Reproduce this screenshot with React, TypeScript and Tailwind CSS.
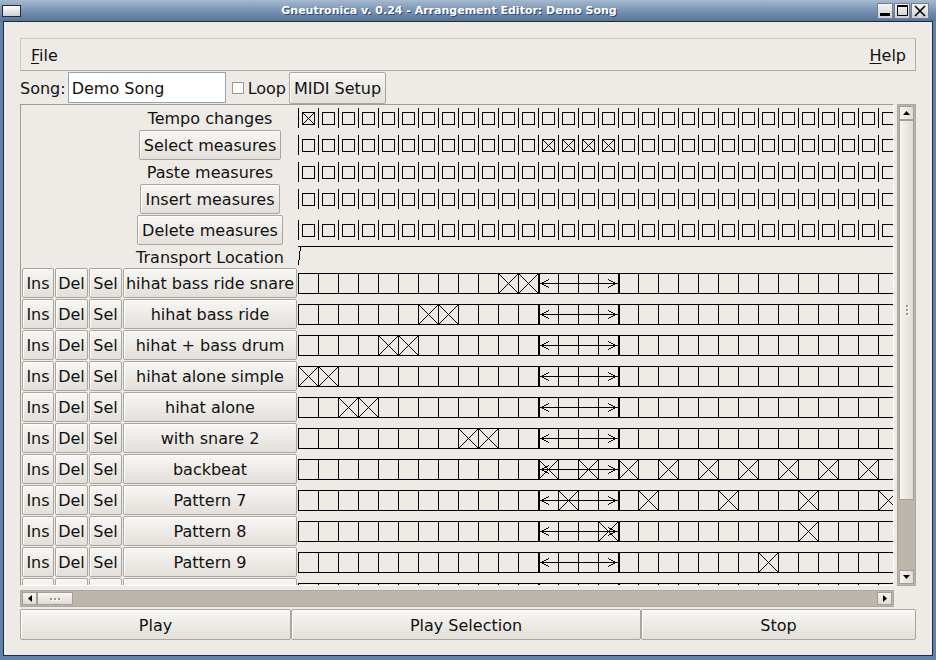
import React from "react";

const COLS = 30;
const idx = Array.from({ length: COLS }, (_, i) => i);

const btn =
  "flex items-center justify-center shrink-0 pt-[2px] rounded-[2px] border border-[#aaa59e] bg-linear-to-b from-[#f8f7f5] to-[#e3dfd9] shadow-[inset_1px_1px_0_#ffffff] text-[16px] leading-none whitespace-nowrap text-[#111]";

function CheckRow({ on = [] }: { on?: number[] }) {
  return (
    <svg width={601} height={20} shapeRendering="crispEdges" className="block shrink-0">
      {idx.map((i) => {
        const x = 20 * i;
        return (
          <g key={i} stroke="#000" fill="none">
            <line x1={x + 0.5} y1={0} x2={x + 0.5} y2={20} />
            <rect x={x + 4.5} y={4.5} width={12} height={12} />
            {on.includes(i) && (
              <>
                <line x1={x + 4.5} y1={4.5} x2={x + 16.5} y2={16.5} />
                <line x1={x + 16.5} y1={4.5} x2={x + 4.5} y2={16.5} />
              </>
            )}
          </g>
        );
      })}
    </svg>
  );
}

function PatternGrid({ marks }: { marks: number[] }) {
  return (
    <svg width={601} height={30} shapeRendering="crispEdges" className="block shrink-0">
      <g stroke="#000" fill="none">
        <line x1={0} y1={5.5} x2={601} y2={5.5} />
        <line x1={0} y1={25.5} x2={601} y2={25.5} />
        {Array.from({ length: 31 }, (_, i) => (
          <line key={i} x1={20 * i + 0.5} y1={5} x2={20 * i + 0.5} y2={26} />
        ))}
        {marks.map((i) => (
          <g key={"m" + i}>
            <line x1={20 * i + 0.5} y1={5.5} x2={20 * i + 20.5} y2={25.5} />
            <line x1={20 * i + 20.5} y1={5.5} x2={20 * i + 0.5} y2={25.5} />
          </g>
        ))}
        <line x1={242} y1={15.5} x2={320} y2={15.5} />
        <polyline points="251,11.5 243,15.5 251,19.5" />
        <polyline points="310,11.5 318,15.5 310,19.5" />
      </g>
      <rect x={240} y={5} width={2} height={21} fill="#000" />
      <rect x={320} y={5} width={2} height={21} fill="#000" />
    </svg>
  );
}

function TransportGrid() {
  return (
    <svg width={601} height={21} shapeRendering="crispEdges" className="block shrink-0">
      <line x1={0} y1={0.5} x2={601} y2={0.5} stroke="#000" />
      <line x1={2.5} y1={1} x2={0.5} y2={19} stroke="#000" />
    </svg>
  );
}

const patterns: [string, number[]][] = [
  ["hihat bass ride snare", [10, 11]],
  ["hihat bass ride", [6, 7]],
  ["hihat + bass drum", [4, 5]],
  ["hihat alone simple", [0, 1]],
  ["hihat alone", [2, 3]],
  ["with snare 2", [8, 9]],
  ["backbeat", [12, 14, 16, 18, 20, 22, 24, 26, 28]],
  ["Pattern 7", [13, 17, 21, 25, 29]],
  ["Pattern 8", [15, 25]],
  ["Pattern 9", [23]],
];

function LabelCell({ children, text }: { children: React.ReactNode; text?: boolean }) {
  return (
    <>
      <div className="w-[100px] shrink-0" />
      <div
        className={
          "w-[174px] shrink-0 h-full flex items-center justify-center text-[16px] whitespace-nowrap" +
          (text ? " pt-[2px]" : "")
        }
      >
        {children}
      </div>
    </>
  );
}

function Dots({ vertical }: { vertical?: boolean }) {
  return (
    <div className={vertical ? "flex flex-col gap-[2px]" : "flex gap-[2px]"}>
      {[0, 1, 2].map((i) => (
        <div key={i} className="w-[2px] h-[2px] bg-[#9a958d] shadow-[1px_1px_0_#ffffff]" />
      ))}
    </div>
  );
}

function Arrow({ dir }: { dir: "up" | "down" | "left" | "right" }) {
  const pts =
    dir === "up"
      ? "0,4 3.5,0 7,4"
      : dir === "down"
      ? "0,0 3.5,4 7,0"
      : dir === "left"
      ? "4,0 0,3.5 4,7"
      : "0,0 4,3.5 0,7";
  const w = dir === "up" || dir === "down" ? 7 : 4;
  const h = dir === "up" || dir === "down" ? 4 : 7;
  return (
    <svg width={w} height={h} className="block">
      <polygon points={pts} fill="#000" />
    </svg>
  );
}

const sbBtnV =
  "shrink-0 flex items-center justify-center border border-[#a29d95] bg-linear-to-r from-[#f6f5f3] to-[#e0dcd6]";
const sbBtnH =
  "shrink-0 flex items-center justify-center border border-[#a29d95] bg-linear-to-b from-[#f6f5f3] to-[#e0dcd6]";

export default function App() {
  return (
    <div className="w-[936px] h-[660px] flex flex-col bg-[#6181a7] font-['DejaVu_Sans',sans-serif] text-[#111] overflow-hidden">
      {/* Title bar */}
      <div className="h-[21px] shrink-0 flex items-center bg-linear-to-b from-[#a6b9cf] via-[#7a94b4] to-[#56739a]">
        <div className="ml-[2px] w-[19px] h-[12px] border border-[#2a2a2a] bg-linear-to-b from-white to-[#cfcfcf]" />
        <div className="flex-1 text-center text-white font-bold text-[11px] leading-none [text-shadow:1px_1px_0_#34496b]">
          Gneutronica v. 0.24 - Arrangement Editor: Demo Song
        </div>
        <div className="flex gap-[1px] mr-[7px]">
          <div className="w-[16px] h-[16px] border border-[#6f7f94] bg-linear-to-b from-[#f4f4f4] to-[#cfcfcf] flex items-end justify-center pb-[2px]">
            <div className="w-[10px] h-[3px] bg-black" />
          </div>
          <div className="w-[16px] h-[16px] border border-[#6f7f94] bg-linear-to-b from-[#f4f4f4] to-[#cfcfcf] flex items-center justify-center">
            <div className="w-[11px] h-[11px] border border-black border-t-[2px]" />
          </div>
          <div className="w-[18px] h-[16px] border border-[#6f7f94] bg-linear-to-b from-[#f4f4f4] to-[#cfcfcf] flex items-center justify-center">
            <svg width="12" height="12" className="block">
              <line x1="1" y1="1" x2="11" y2="11" stroke="#000" strokeWidth="1.6" />
              <line x1="11" y1="1" x2="1" y2="11" stroke="#000" strokeWidth="1.6" />
            </svg>
          </div>
        </div>
      </div>

      {/* Window body */}
      <div className="flex-1 mx-[3px] mb-[4px] border border-[#1d2c42] bg-[#eeebe7] flex flex-col px-[16px] pt-[16px]">
        {/* Menu bar */}
        <div className="h-[33px] shrink-0 flex items-center justify-between pt-[2px] pl-[10px] pr-[9px] border border-[#cdc9c2] border-b-[#b0aba3] border-r-[#b0aba3] text-[16px]">
          <span>
            <span className="underline underline-offset-2">F</span>ile
          </span>
          <span>
            <span className="underline underline-offset-2">H</span>elp
          </span>
        </div>

        {/* Song row */}
        <div className="h-[33px] shrink-0 flex items-center text-[16px]">
          <span className="pt-[2px]">Song:</span>
          <div className="ml-[2px] w-[158px] h-[31px] bg-white border border-[#8fa3bb] px-[3px] pt-[2px] flex items-center">
            Demo Song
          </div>
          <div className="ml-[6px] w-[12px] h-[12px] bg-white border border-[#9c9890]" />
          <span className="ml-[4px] pt-[2px]">Loop</span>
          <div className={btn + " ml-[3px] w-[97px] h-[32px]"}>MIDI Setup</div>
        </div>

        {/* Scrolled area */}
        <div className="shrink-0 grid grid-cols-[874px_19px] grid-rows-[482px_17px] gap-x-[3px] gap-y-[4px]">
          {/* Viewport */}
          <div className="border border-[#a09b93] border-b-white border-r-white overflow-hidden">
            <div className="flex flex-col gap-[1px] pt-[1px] pl-[1px]">
              {/* Tempo */}
              <div className="h-[23px] flex items-center gap-[1px]">
                <LabelCell text>Tempo changes</LabelCell>
                <div className="flex-1 overflow-hidden">
                  <CheckRow on={[0]} />
                </div>
              </div>
              {/* Select */}
              <div className="h-[30px] flex items-center gap-[1px]">
                <LabelCell>
                  <div className={btn + " h-[30px] px-[4px]"}>Select measures</div>
                </LabelCell>
                <div className="flex-1 overflow-hidden">
                  <CheckRow on={[12, 13, 14, 15]} />
                </div>
              </div>
              {/* Paste */}
              <div className="h-[22px] flex items-center gap-[1px]">
                <LabelCell text>Paste measures</LabelCell>
                <div className="flex-1 overflow-hidden">
                  <CheckRow />
                </div>
              </div>
              {/* Insert */}
              <div className="h-[30px] flex items-center gap-[1px]">
                <LabelCell>
                  <div className={btn + " h-[30px] px-[4px]"}>Insert measures</div>
                </LabelCell>
                <div className="flex-1 overflow-hidden">
                  <CheckRow />
                </div>
              </div>
              {/* Delete */}
              <div className="h-[30px] flex items-center gap-[1px]">
                <LabelCell>
                  <div className={btn + " h-[30px] px-[4px]"}>Delete measures</div>
                </LabelCell>
                <div className="flex-1 overflow-hidden">
                  <CheckRow />
                </div>
              </div>
              {/* Transport */}
              <div className="h-[21px] flex items-start gap-[1px]">
                <LabelCell text>Transport Location</LabelCell>
                <div className="flex-1 overflow-hidden">
                  <TransportGrid />
                </div>
              </div>
              {/* Pattern rows */}
              {patterns.map(([name, marks]) => (
                <div key={name} className="h-[30px] shrink-0 flex gap-[1px]">
                  <div className={btn + " w-[32px] h-[30px]"}>Ins</div>
                  <div className={btn + " w-[33px] h-[30px]"}>Del</div>
                  <div className={btn + " w-[33px] h-[30px]"}>Sel</div>
                  <div className={btn + " w-[174px] h-[30px]"}>{name}</div>
                  <div className="flex-1 overflow-hidden">
                    <PatternGrid marks={marks} />
                  </div>
                </div>
              ))}
              <div className="h-[30px] shrink-0 flex gap-[1px]">
                <div className={btn + " w-[32px] h-[30px]"} />
                <div className={btn + " w-[33px] h-[30px]"} />
                <div className={btn + " w-[33px] h-[30px]"} />
                <div className={btn + " w-[174px] h-[30px]"} />
                <div className="flex-1 overflow-hidden">
                  <PatternGrid marks={[]} />
                </div>
              </div>
            </div>
          </div>

          {/* Vertical scrollbar */}
          <div className="flex flex-col border border-[#aca79f] bg-[#bcb6ad] p-[1px]">
            <div className={sbBtnV + " h-[14px]"}>
              <Arrow dir="up" />
            </div>
            <div className={sbBtnV + " h-[380px]"}>
              <Dots vertical />
            </div>
            <div className="flex-1" />
            <div className={sbBtnV + " h-[14px]"}>
              <Arrow dir="down" />
            </div>
          </div>

          {/* Horizontal scrollbar */}
          <div className="flex border border-[#aca79f] bg-[#bcb6ad] p-[1px]">
            <div className={sbBtnH + " w-[15px]"}>
              <Arrow dir="left" />
            </div>
            <div className={sbBtnH + " w-[36px]"}>
              <Dots />
            </div>
            <div className="flex-1" />
            <div className={sbBtnH + " w-[15px]"}>
              <Arrow dir="right" />
            </div>
          </div>
          <div />
        </div>

        {/* Bottom buttons */}
        <div className="mt-[2px] h-[31px] shrink-0 flex">
          <div className={btn + " w-[271px] h-[31px]"}>Play</div>
          <div className={btn + " w-[350px] h-[31px]"}>Play Selection</div>
          <div className={btn + " flex-1 h-[31px]"}>Stop</div>
        </div>
      </div>
    </div>
  );
}
